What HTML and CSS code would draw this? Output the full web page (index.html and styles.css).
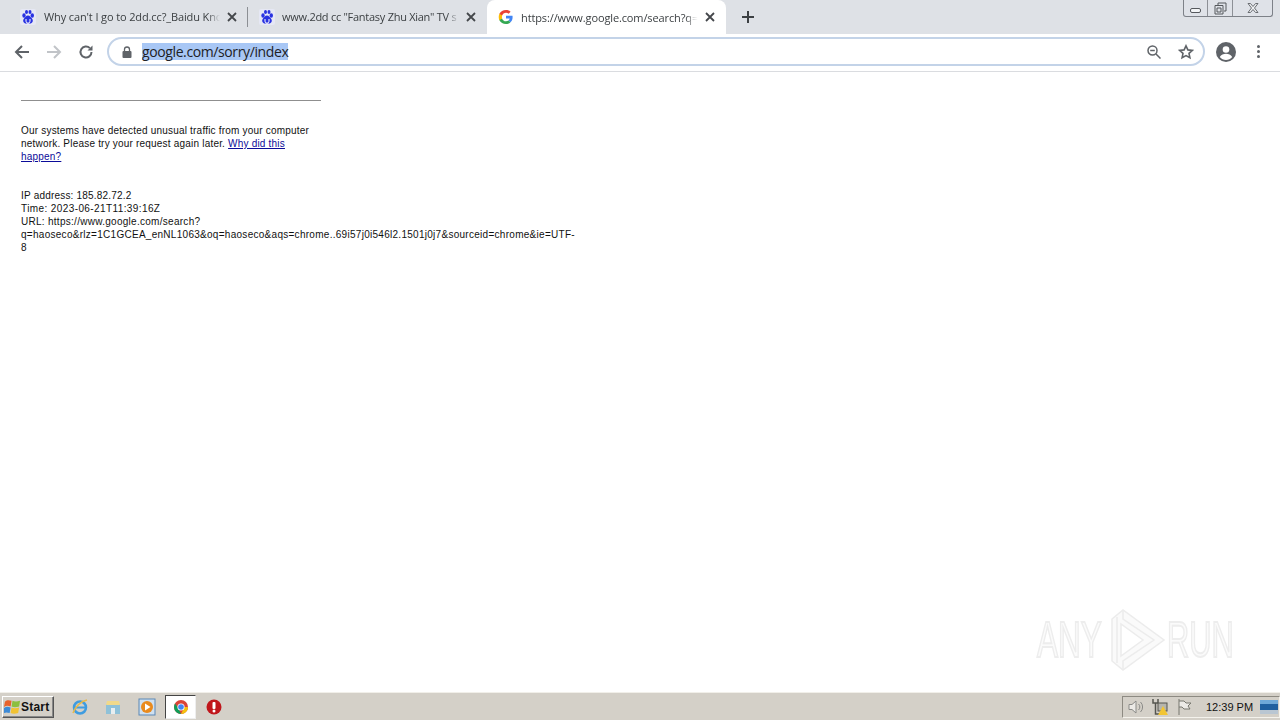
FILE: index.html
```html
<!DOCTYPE html>
<html lang="en">
<head>
<meta charset="utf-8">
<title>Google sorry</title>
<link rel="stylesheet" href="styles.css">
</head>
<body>
<div class="screen">
  <header class="tabbar">
    <div class="tab tab-first">
      <svg class="favicon" viewBox="0 0 16 16"><use href="#paw"/></svg>
      <span class="tab-title">Why can't I go to 2dd.cc?_Baidu Knc</span>
      <svg class="tab-close" viewBox="0 0 10 10"><path d="M1 1l8 8M9 1l-8 8"/></svg>
    </div>
    <div class="tab-sep"></div>
    <div class="tab tab-second">
      <svg class="favicon" viewBox="0 0 16 16"><use href="#paw"/></svg>
      <span class="tab-title">www.2dd cc "Fantasy Zhu Xian" TV s</span>
      <svg class="tab-close" viewBox="0 0 10 10"><path d="M1 1l8 8M9 1l-8 8"/></svg>
    </div>
    <div class="tab tab-active">
      <svg class="favicon gicon" viewBox="0 0 16 16">
        <path d="M14.6 8.2c0-.5 0-1-.1-1.4H8v2.7h3.7c-.2.9-.6 1.600-1.300 2.100l2.100 1.700c1.300-1.200 2.100-3 2.100-5.100z" fill="#4285f4"/>
        <path d="M8 15c1.900 0 3.400-.6 4.500-1.700l-2.100-1.700c-.6.4-1.400.7-2.400.7-1.800 0-3.400-1.200-3.900-2.900H1.400v1.800C2.600 13.400 5.100 15 8 15z" fill="#34a853"/>
        <path d="M4.100 9.400C4 9 3.900 8.500 3.900 8s.1-1 .2-1.400V4.800H1.400C1 5.700.7 6.800.7 8s.3 2.300.7 3.200z" fill="#fbbc05"/>
        <path d="M8 3.700c1 0 1.900.4 2.600 1l2-2C11.400 1.700 9.900 1 8 1 5.100 1 2.600 2.600 1.400 4.800l2.700 1.800C4.600 4.900 6.200 3.700 8 3.700z" fill="#ea4335"/>
      </svg>
      <span class="tab-title">https://www.google.com/search?q=</span>
      <svg class="tab-close" viewBox="0 0 10 10"><path d="M1 1l8 8M9 1l-8 8"/></svg>
    </div>
    <svg class="new-tab" viewBox="0 0 12 12"><path d="M6 0v12M0 6h12"/></svg>
    <div class="window-controls">
      <div class="wc wc-min"><span></span></div>
      <div class="wc wc-max">
        <svg viewBox="0 0 13 13"><path d="M4 3V1h8v8h-2M1 3.500h8v8.500H1zM3 6h4v4H3z"/></svg>
      </div>
      <div class="wc wc-close">
        <svg viewBox="0 0 12 10"><path d="M1 .5h2.500L6 3.500 8.500.5H11L7.500 5 11 9.500H8.500L6 6.500 3.500 9.500H1L4.500 5z"/></svg>
      </div>
    </div>
  </header>

  <nav class="toolbar">
    <svg class="nav-icon nav-back" viewBox="0 0 16 16"><path d="M15 8H2M8 2L2 8l6 6"/></svg>
    <svg class="nav-icon nav-forward" viewBox="0 0 16 16"><path d="M1 8h13M8 2l6 6-6 6"/></svg>
    <svg class="nav-icon nav-reload" viewBox="0 0 16 16"><path d="M13.500 8a5.500 5.500 0 1 1-1.600-3.900"/><path class="fill" d="M14.500 1.500v5h-5z"/></svg>
    <div class="omnibox">
      <svg class="lock" viewBox="0 0 10 12"><path d="M2.500 5V3.500a2.500 2.500 0 0 1 5 0V5" class="lock-arc"/><rect x="0.500" y="5" width="9" height="7" rx="1"/></svg>
      <span class="url">google.com/sorry/index</span>
      <div class="omni-right">
        <svg class="zoom-icon" viewBox="0 0 14 14"><circle cx="5.500" cy="5.500" r="4.500"/><path d="M9 9l4.500 4.500M3.200 5.500h4.600"/></svg>
        <svg class="star" viewBox="0 0 16 16"><path d="M8 1.800l1.900 4.100 4.400.5-3.300 3 .9 4.400L8 11.600l-3.900 2.200.9-4.400-3.300-3 4.400-.5z"/></svg>
      </div>
    </div>
    <svg class="avatar" viewBox="0 0 20 20"><circle cx="10" cy="10" r="10" class="av-bg"/><circle cx="10" cy="7.500" r="3.300" class="av-fg"/><path d="M3.800 15c1.300-2.300 3.700-3.300 6.200-3.300s4.900 1 6.200 3.300c-1.500 1.900-3.700 3-6.200 3s-4.700-1.100-6.200-3z" class="av-fg"/></svg>
    <div class="menu-dots"><i></i><i></i><i></i></div>
  </nav>

  <main class="page">
    <hr class="rule">
    <p class="notice">Our systems have detected unusual traffic from your computer network. Please try your request again later. <a href="#">Why did this happen?</a></p>
    <div class="details">
      <div>IP address: 185.82.72.2</div>
      <div class="time-line">Time: 2023-06-21T11:39:16Z</div>
      <div class="url-line">URL: https://www.google.com/search?q=haoseco&amp;rlz=1C1GCEA_enNL1063&amp;oq=haoseco&amp;aqs=chrome..69i57j0i546l2.1501j0j7&amp;sourceid=chrome&amp;ie=UTF-8</div>
    </div>
    <div class="watermark">
      <span class="wm-word">ANY</span>
      <svg viewBox="0 0 56 62">
        <path class="wm-outer" d="M2 10L13 1 54 31 13 61 2 52z"/>
        <path class="wm-inner" d="M11 15V47L33 31z"/>
        <path class="wm-line" d="M7 8V54M13 1V10L44 31 13 52V61"/>
      </svg>
      <span class="wm-word wm-run">RUN</span>
    </div>
  </main>

  <footer class="taskbar">
    <button class="start">
      <svg viewBox="0 0 18 18"><path d="M1 4c2-2 4-2 7-1L7 9C4 8 2.500 8 0 9.500z" fill="#e8622c"/><path d="M9 3c2 1 5 1 8 0l-1 6c-3 1-6 1-8 0z" fill="#8cbf3f"/><path d="M0 10.500C2.500 9 4 9 7 10l-1 6c-3-1-4.500-1-7 .5z" fill="#3d8ad6"/><path d="M8 10c2 1 5 1 8 0l-1 6c-3 1-6 1-8 0z" fill="#f1c232"/></svg>
      <span>Start</span>
    </button>
    <div class="quick">
      <svg class="qi" viewBox="0 0 18 18"><circle cx="9" cy="9.500" r="6" fill="none" stroke="#3f9ce0" stroke-width="2.500"/><path d="M4 9.500h10" stroke="#3f9ce0" stroke-width="2"/><path d="M2 15C4 9 10 3 16 2" fill="none" stroke="#e9b949" stroke-width="1.500"/></svg>
      <svg class="qi" viewBox="0 0 18 18"><path d="M2 6h14v10H2z" fill="#8fc1d8"/><path d="M3 3h12l1 4H2z" fill="#f1d98a"/><path d="M7 10h4v6H7z" fill="#e8eef0"/></svg>
      <svg class="qi qi-media" viewBox="0 0 18 18"><rect x="1" y="1" width="16" height="16" fill="#cfe0f0" stroke="#5b87b5"/><circle cx="9" cy="9" r="6" fill="#e98a1d"/><path d="M7 5.500L12.500 9 7 12.500z" fill="#fff"/></svg>
      <div class="chrome-btn">
        <svg class="qi" viewBox="0 0 16 16"><circle cx="8" cy="8" r="7" fill="#db4437"/><path d="M8 15A7 7 0 0 1 2 4.500L5.500 9.500 8 15z" fill="#0f9d58"/><path d="M15 8A7 7 0 0 1 8 15L11.500 8H15z" fill="#f4c20d"/><circle cx="8" cy="8" r="3.600" fill="#fff"/><circle cx="8" cy="8" r="2.800" fill="#4285f4"/></svg>
      </div>
      <svg class="qi qi-opera" viewBox="0 0 16 16"><circle cx="8" cy="8" r="7.500" fill="#c0161b"/><rect x="6.500" y="3" width="3" height="7" rx="1" fill="#fff"/><circle cx="8" cy="12" r="1.500" fill="#fff"/></svg>
    </div>
    <div class="tray">
      <svg class="ti" viewBox="0 0 18 18"><path d="M2 6.500h3L9 3v12l-4-3.500H2z" fill="#eceae6" stroke="#8b8b88"/><path d="M11.500 6a4 4 0 0 1 0 6M13.500 4a7 7 0 0 1 0 10" fill="none" stroke="#8b8b88"/></svg>
      <svg class="ti" viewBox="0 0 18 18"><path d="M2 1v4h5V1M4.500 5v11H9" fill="none" stroke="#55554f" stroke-width="1.500"/><rect x="7" y="5" width="9" height="8" fill="#b6b5ae" stroke="#55554f"/><path d="M12 8l5 9H7z" fill="#f2c533"/></svg>
      <svg class="ti" viewBox="0 0 18 18"><path d="M4 1v16M4 3h5l2 2h5l-3 3 2 3H9L7 9H4" fill="#eceae6" stroke="#77776f"/></svg>
      <span class="clock">12:39 PM</span>
      <svg class="desktop" viewBox="0 0 18 14"><rect width="18" height="14" fill="#1f5f9f"/><rect width="18" height="4" fill="#6ea8d8"/><rect y="10" width="18" height="4" fill="#b9c6d2"/></svg>
    </div>
  </footer>
</div>
<svg class="defs" aria-hidden="true"><defs>
  <symbol id="paw" viewBox="0 0 16 16">
    <rect width="16" height="16" rx="2" fill="#e6e8f5"/>
    <ellipse cx="4" cy="6.500" rx="1.700" ry="2.200" fill="#2932e1"/>
    <ellipse cx="6.500" cy="3" rx="1.500" ry="2" fill="#2932e1"/>
    <ellipse cx="10" cy="3" rx="1.500" ry="2" fill="#2932e1"/>
    <ellipse cx="12.300" cy="6.500" rx="1.700" ry="2.200" fill="#2932e1"/>
    <path d="M8 6.500c2 0 3 2 4.300 3.500 1.300 2 0 4.500-2.300 4.500-1 0-1.300-.3-2-.3s-1 .3-2 .3c-2.300 0-3.600-2.500-2.300-4.500C5 8.500 6 6.500 8 6.500z" fill="#2932e1"/>
    <path d="M6 10v2.200a1.200 1.200 0 0 0 4 0V10" fill="none" stroke="#fff"/>
  </symbol>
</defs></svg>
</body>
</html>
```
FILE: styles.css
```css
* { box-sizing: border-box; }
html, body { margin: 0; padding: 0; height: 100%; overflow: hidden; }
body { font-family: "Liberation Sans", Arial, sans-serif; background: #fff; }
.defs { width: 0; height: 0; display: block; }
.screen { width: 1280px; height: 720px; display: flex; flex-direction: column; }

.tabbar { height: 34px; flex: none; background: #dee1e6; display: flex; align-items: stretch; padding-left: 8px; position: relative; }
.tab { display: flex; align-items: center; font: 11px "Open Sans", "Liberation Sans", sans-serif; letter-spacing: -.12px; color: #3c4043; height: 33px; }
.tab-first { width: 239px; padding-left: 12px; }
.tab-second { width: 239px; padding-left: 11px; }
.tab-active { width: 239px; height: 34px; padding-left: 11px; background: #fff; border-radius: 8px 8px 0 0; }
.tab-sep { width: 1px; height: 20px; margin-top: 7px; background: #8c8f94; }
.favicon { width: 16px; height: 16px; flex: none; }
.tab-title { flex: none; width: 176px; margin-left: 8px; white-space: nowrap; -webkit-mask-image: linear-gradient(to right, #000 93%, transparent); mask-image: linear-gradient(to right, #000 93%, transparent); }
.tab-second .tab-title { margin-left: 7px; width: 177px; letter-spacing: -.27px; }
.tab-active .tab-title { margin-left: 7px; width: 177px; }
.tab-close { width: 10px; height: 10px; flex: none; margin-left: 7px; fill: none; stroke: #44474b; stroke-width: 1.800; }
.new-tab { width: 12px; height: 12px; margin: 11px 0 0 16px; fill: none; stroke: #3c4043; stroke-width: 2; }

.window-controls { position: absolute; top: 0; right: 7px; width: 90px; height: 17px; display: flex; background: #dfe2e8; border: 1px solid #7d8188; border-top: 0; border-radius: 0 0 3px 3px; }
.wc { display: flex; align-items: center; justify-content: center; border-right: 1px solid #8d9096; }
.wc:last-child { border-right: 0; }
.wc-min { width: 24px; padding-top: 4px; }
.wc-min span { width: 11px; height: 5px; border: 1px solid #55585d; border-radius: 2px; background: #f2f4f6; }
.wc-max { width: 25px; }
.wc-max svg { width: 13px; height: 13px; fill: none; stroke: #55585d; }
.wc-close { flex: 1; }
.wc-close svg { width: 12px; height: 10px; fill: #eef0f2; stroke: #6a6d72; }

.toolbar { height: 38px; flex: none; background: #fff; border-bottom: 1px solid #dadce0; display: flex; align-items: center; padding: 0 0 2px 14px; }
.nav-icon { width: 16px; height: 16px; flex: none; fill: none; stroke-width: 2; }
.nav-back { stroke: #5f6368; }
.nav-forward { stroke: #c1c4c8; margin-left: 16px; }
.nav-reload { stroke: #5f6368; margin-left: 16px; }
.nav-reload .fill { fill: #5f6368; stroke: none; }
.omnibox { width: 1098px; height: 29px; margin-left: 13px; border: 2px solid #c3d3e8; border-radius: 15px; display: flex; align-items: center; padding-left: 13px; padding-right: 9px; }
.lock { width: 10px; height: 12px; flex: none; fill: #5f6368; }
.lock-arc { fill: none; stroke: #5f6368; stroke-width: 1.300; }
.url { margin-left: 10px; font: 14px/17px "Open Sans", "Liberation Sans", sans-serif; letter-spacing: -.39px; color: #202124; background: #a8c7f5; }
.omni-right { margin-left: auto; display: flex; align-items: center; gap: 17px; }
.zoom-icon { width: 14px; height: 14px; fill: none; stroke: #5f6368; stroke-width: 1.500; }
.star { width: 16px; height: 16px; fill: none; stroke: #5f6368; stroke-width: 1.600; }
.avatar { width: 20px; height: 20px; flex: none; margin-left: 11px; }
.av-bg { fill: #5f6368; }
.av-fg { fill: #fff; }
.menu-dots { display: flex; flex-direction: column; gap: 2px; margin-left: 21px; }
.menu-dots i { display: block; width: 3px; height: 3px; background: #5f6368; border-radius: 50%; }

.page { flex: 1; position: relative; padding: 28px 0 0 21px; background: #fff; font-size: 10px; line-height: 13px; color: #111; letter-spacing: .2px; }
.rule { width: 300px; height: 1px; margin: 0; border: 0; background: #8f8f8f; }
.notice { width: 300px; margin: 23px 0 0; }
.notice a { color: #0b0b99; text-decoration: underline; }
.details { width: 556px; margin: 26px 0 0; }
.time-line { letter-spacing: .4px; }
.url-line { letter-spacing: .28px; }

.watermark { position: absolute; left: 1037px; top: 537px; width: 194px; height: 62px; display: flex; align-items: center; justify-content: space-between; }
.watermark svg { width: 56px; height: 62px; flex: none; margin-left: 7px; fill: none; stroke: #ececec; stroke-width: 1.500; }
.wm-outer { fill: #fafafa; }
.wm-inner { fill: #fff; }
.wm-word { display: block; width: 64px; font: 50px/62px "Liberation Sans", sans-serif; letter-spacing: 0; color: #fbfbfb; -webkit-text-stroke: 2px #ededed; white-space: nowrap; transform-origin: left center; transform: scaleX(.63); }
.wm-run { transform: scaleX(.615); }

.taskbar { height: 28px; flex: none; background: #d4d0c8; border-top: 1px solid #f1efe9; display: flex; align-items: center; position: relative; }
.start { width: 52px; height: 22px; margin-left: 2px; padding: 0 0 0 1px; display: flex; align-items: center; gap: 0; background: #d4d0c8; border: 1px solid; border-color: #fff #555 #555 #fff; box-shadow: inset -1px -1px 0 #888; font: bold 12px "Liberation Sans", sans-serif; letter-spacing: .2px; color: #111; }
.start svg { width: 17px; height: 17px; flex: none; }
.quick { display: flex; align-items: center; margin-left: 17px; }
.qi { width: 18px; height: 18px; flex: none; }
.quick > .qi + .qi { margin-left: 15px; }
.quick > .qi + .qi-media { margin-left: 16px; }
.quick > .qi-opera { margin-left: 10px; width: 16px; height: 16px; }
.chrome-btn { width: 31px; height: 24px; margin-left: 9px; background: #fff; border: 1px solid; border-color: #444 #eee #eee #444; display: flex; align-items: center; justify-content: center; }
.chrome-btn .qi { width: 16px; height: 16px; }
.tray { margin-left: auto; width: 158px; height: 22px; display: flex; align-items: center; border: 1px solid; border-color: #8d8a82 #f4f2ec #f4f2ec #8d8a82; padding-left: 4px; }
.ti { width: 18px; height: 18px; flex: none; margin-right: 6px; }
.clock { flex: none; white-space: nowrap; font: 11px "Liberation Sans", sans-serif; color: #111; margin-left: 7px; }
.desktop { width: 18px; height: 14px; flex: none; margin-left: 7px; }
```
